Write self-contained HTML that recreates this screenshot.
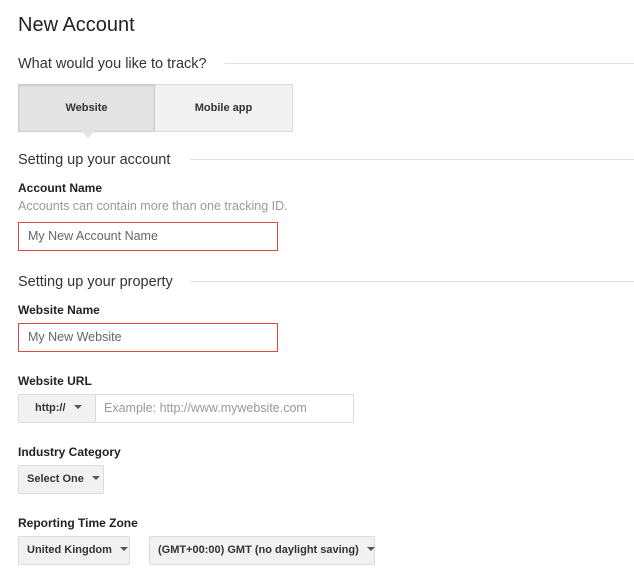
<!DOCTYPE html>
<html><head><style>
body{margin:0;width:634px;height:580px;background:#fff;font-family:"Liberation Sans",Arial,sans-serif;color:#222;position:relative;overflow:hidden}
.a{position:absolute;white-space:nowrap}
.h1{left:18px;top:14px;font-size:20px;color:#222}
.sec{left:18px;font-size:14.5px;color:#333}
.line{position:absolute;height:1px;background:#e0e0e0;right:0}
.lbl{left:18px;font-size:12px;font-weight:bold;color:#222}
.inp{box-sizing:border-box;border:1px solid #dd4b39;background:#fff;font-size:12.5px;color:#666;padding-left:9px;line-height:27px}
.btn{box-sizing:border-box;background:#f1f1f1;border:1px solid #dcdcdc;font-size:11px;font-weight:bold;color:#333;line-height:27px;padding-left:8px;border-radius:2px}
.car{display:inline-block;width:0;height:0;border-left:4px solid transparent;border-right:4px solid transparent;border-top:4px solid #555;vertical-align:middle;margin-left:8px;margin-top:-2px}
</style></head><body>
<div class="a h1">New Account</div>
<div class="a sec" style="top:56px">What would you like to track?</div><div class="line" style="left:225px;top:63px"></div>
<div class="a" style="left:18px;top:84px;width:137px;height:48px;box-sizing:border-box;background:#e4e4e4;border:1px solid #ccc;box-shadow:inset 0 1px 2px rgba(0,0,0,.1);font-size:11px;font-weight:bold;color:#333;text-align:center;line-height:47px">Website</div>
<div class="a" style="left:155px;top:84px;width:138px;height:48px;box-sizing:border-box;background:#f1f1f1;border:1px solid #dcdcdc;border-left:none;font-size:11px;font-weight:bold;color:#333;text-align:center;line-height:47px">Mobile app</div>
<div class="a" style="left:81px;top:131px;width:0;height:0;border-left:7px solid transparent;border-right:7px solid transparent;border-top:7px solid #e4e4e4"></div>
<div class="a sec" style="top:152px">Setting up your account</div><div class="line" style="left:190px;top:159px"></div>
<div class="a lbl" style="top:181px">Account Name</div>
<div class="a" style="left:18px;top:199px;font-size:12.5px;color:#999">Accounts can contain more than one tracking ID.</div>
<div class="a inp" style="left:18px;top:222px;width:260px;height:29px">My New Account Name</div>
<div class="a sec" style="top:274px">Setting up your property</div><div class="line" style="left:190px;top:281px"></div>
<div class="a lbl" style="top:303px">Website Name</div>
<div class="a inp" style="left:18px;top:323px;width:260px;height:29px">My New Website</div>
<div class="a lbl" style="top:374px">Website URL</div>
<div class="a btn" style="left:18px;top:394px;width:78px;height:29px;padding-left:16px">http://<span class="car"></span></div>
<div class="a inp" style="left:95px;top:394px;width:259px;height:29px;border-color:#dcdcdc;color:#999;padding-left:8px">Example: http://www.mywebsite.com</div>
<div class="a lbl" style="top:445px">Industry Category</div>
<div class="a btn" style="left:18px;top:465px;width:86px;height:29px">Select One<span class="car"></span></div>
<div class="a lbl" style="top:516px">Reporting Time Zone</div>
<div class="a btn" style="left:18px;top:536px;width:112px;height:29px">United Kingdom<span class="car"></span></div>
<div class="a btn" style="left:149px;top:536px;width:226px;height:29px">(GMT+00:00) GMT (no daylight saving)<span class="car"></span></div>
</body></html>
